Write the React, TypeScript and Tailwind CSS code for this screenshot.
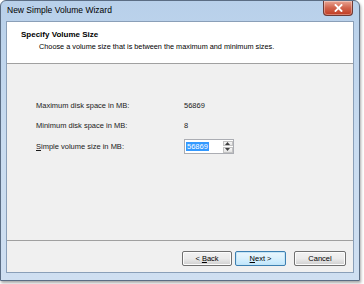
import React from 'react';

const font = { fontFamily: '"Liberation Sans", Arial, sans-serif' };

function WinButton({ label, hot, primary }: { label: string; hot?: number; primary?: boolean }) {
  // underline the access key letter, if there is one
  const content =
    hot === undefined ? (
      label
    ) : (
      <>
        {label.slice(0, hot)}
        <span className="underline">{label.slice(hot, hot + 1)}</span>
        {label.slice(hot + 1)}
      </>
    );
  return (
    <div
      className={`h-[15px] flex items-center justify-center rounded-[2px] border text-[7.5px] text-black ${
        primary
          ? 'border-[#3c7fb1] bg-gradient-to-b from-[#eaf6fd] via-[#d9f0fc] to-[#bee6fd] shadow-[inset_0_0_0_1px_#c4e5f6]'
          : 'border-[#707070] bg-gradient-to-b from-[#f2f2f2] via-[#ebebeb] to-[#cfcfcf] shadow-[inset_0_0_0_1px_#fcfcfc]'
      }`}
    >
      <span>{content}</span>
    </div>
  );
}

export default function App() {
  return (
    <div className="w-[364px] h-[284px] bg-white overflow-hidden" style={font}>
      <div className="w-[360px] h-[281px] rounded-t-[6px] border border-[#5b6d84] bg-gradient-to-b from-[#b8d0ea] via-[#c9dcf0] to-[#cfdff1] flex flex-col shadow-[1px_2px_3px_rgba(0,0,0,0.35)]">
        {/* Title bar */}
        <div className="h-[20px] flex items-start pl-[6px] pr-[6px]">
          <span className="mt-[5px] text-[8.5px] text-black leading-none">New Simple Volume Wizard</span>
          <div className="ml-auto w-[30px] h-[15px] rounded-b-[4px] border border-t-0 border-[#6d3a35] bg-gradient-to-b from-[#e8a493] via-[#d0624b] to-[#c0391f] flex items-center justify-center shadow-[inset_0_0_0_1px_rgba(255,255,255,0.35)]">
            <svg width="9" height="8" viewBox="0 0 9 8">
              <path d="M1.5 1 L7.5 7 M7.5 1 L1.5 7" stroke="#fff" strokeWidth="1.8" strokeLinecap="square" />
            </svg>
          </div>
        </div>

        {/* Client area */}
        <div className="flex-1 mx-[5px] mb-[7px] border border-[#8a9fb8] bg-[#f0f0f0] flex flex-col">
          <div className="h-[42px] bg-white border-b border-[#a0a0a0] flex flex-col pt-[8px]">
            <div className="pl-[14px] text-[8px] font-bold text-black leading-[10px]">Specify Volume Size</div>
            <div className="pl-[32px] mt-[2px] text-[7.3px] text-black leading-[10px]">
              Choose a volume size that is between the maximum and minimum sizes.
            </div>
          </div>

          <div className="flex-1 pt-[32px] pl-[29px] text-[7.5px] text-[#1a1a1a]">
            <div className="h-[20px] flex items-center">
              <span className="w-[148px]">Maximum disk space in MB:</span>
              <span>56869</span>
            </div>
            <div className="h-[20px] flex items-center">
              <span className="w-[148px]">Minimum disk space in MB:</span>
              <span>8</span>
            </div>
            <div className="h-[21px] flex items-center">
              <span className="w-[148px]">
                <span className="underline">S</span>imple volume size in MB:
              </span>
              <div className="h-[15px] w-[50px] border border-[#abadb3] bg-white flex">
                <div className="flex-1 flex items-center pl-[1px]">
                  <span className="bg-[#3399ff] text-white px-[1px] leading-[9px]">56869</span>
                </div>
                <div className="w-[11px] flex flex-col gap-[1px] p-[0.5px]">
                  <div className="flex-1 border border-[#c3c3c3] bg-gradient-to-b from-[#f7f7f7] to-[#e3e3e3] flex items-center justify-center">
                    <svg width="5" height="3" viewBox="0 0 5 3"><path d="M0 3 L2.5 0 L5 3 Z" fill="#404040" /></svg>
                  </div>
                  <div className="flex-1 border border-[#c3c3c3] bg-gradient-to-b from-[#f7f7f7] to-[#e3e3e3] flex items-center justify-center">
                    <svg width="5" height="3" viewBox="0 0 5 3"><path d="M0 0 L5 0 L2.5 3 Z" fill="#404040" /></svg>
                  </div>
                </div>
              </div>
            </div>
          </div>

          <div className="h-[32px] border-t border-[#a0a0a0] flex items-start justify-end pt-[10px] pr-[7px]">
            <div className="w-[50px]"><WinButton label="< Back" hot={2} /></div>
            <div className="w-[51px] ml-[3px]"><WinButton label="Next >" hot={0} primary /></div>
            <div className="w-[52px] ml-[8px]"><WinButton label="Cancel" /></div>
          </div>
        </div>
      </div>
    </div>
  );
}
